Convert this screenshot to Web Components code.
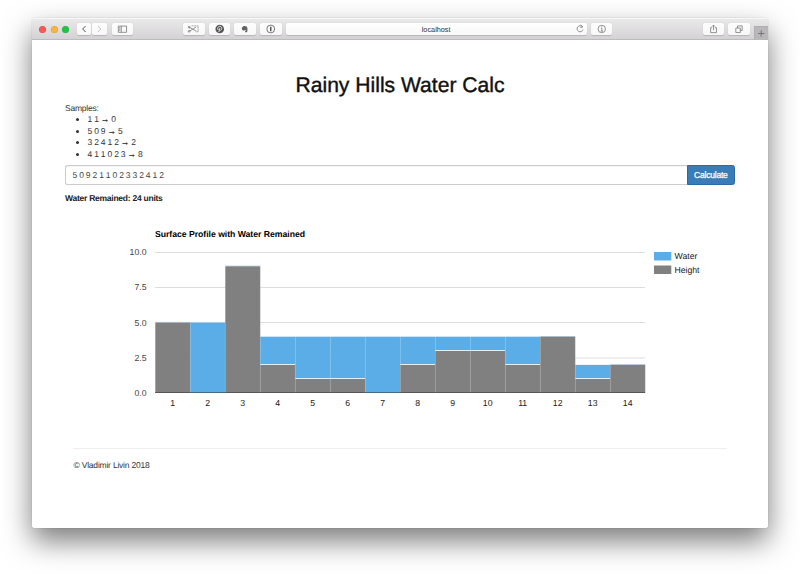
<!DOCTYPE html>
<html lang="en">
<head>
<meta charset="utf-8">
<title>Rainy Hills Water Calc</title>
<style>
html,body{margin:0;height:574px;overflow:hidden;background:#fff}
body{font-family:"Liberation Sans",Arial,sans-serif;font-size:8.5px;letter-spacing:-.21px;line-height:11.5px;color:#333;text-rendering:geometricPrecision}
</style>
</head>
<body>
<browser-window>
  <browser-toolbar slot="bar"></browser-toolbar>
  <water-page></water-page>
</browser-window>
<script>
const define = (name, html, setup) => customElements.define(name, class extends HTMLElement {
  connectedCallback() {
    if (this.shadowRoot) return;
    const root = this.attachShadow({mode: 'open'});
    root.innerHTML = html;
    if (setup) setup(root, this);
  }
});

define('browser-window', `
<style>
:host{display:block;padding:18px 32px 46px}
.frame{height:510px;border-radius:3px;display:flex;flex-direction:column;background:#fff;overflow:hidden}
.shadow{border-radius:3px;box-shadow:0 0 1px rgba(0,0,0,.35),0 13px 29px rgba(0,0,0,.52)}
</style>
<div class="shadow"><div class="frame"><slot name="bar"></slot><slot></slot></div></div>`);

define('tool-button', `
<style>
:host{display:block;width:21.5px;height:12px;border-radius:2px;background:linear-gradient(#fdfdfd,#f7f7f7);box-shadow:0 .5px 1px rgba(0,0,0,.16);flex:none}
::slotted(svg){display:block;width:100%;height:100%;fill:none;stroke:#777;stroke-width:.8}
</style><slot></slot>`);

define('browser-toolbar', `
<style>
:host{display:flex;height:22px;box-sizing:border-box;align-items:center;background:linear-gradient(#eae9ea,#d4d2d4);border-top:1px solid #f7f7f7;border-bottom:1px solid #bdbbbd;flex:none;position:relative}
.lights{display:flex;gap:4.5px;padding-left:7.3px;width:38px;box-sizing:border-box}
.lights i{width:7px;height:7px;border-radius:50%;flex:none;box-shadow:inset 0 0 0 .5px rgba(0,0,0,.12)}
.nav{display:flex;gap:1px;margin-left:7px;margin-right:5px}
.nav tool-button{width:14.3px}
.ext{display:flex;gap:4.2px;margin-left:50px}
.url{width:301px;height:12px;border-radius:2px;background:linear-gradient(#fff,#f8f8f8);box-shadow:0 .5px 1px rgba(0,0,0,.16);margin:0 4px;display:grid;grid-template-columns:1fr auto 1fr;align-items:center;font-size:7.3px;letter-spacing:0;line-height:12px;color:#333;flex:none}
.url svg{justify-self:end;width:12px;height:12px;margin-right:1px;fill:none;stroke:#777;stroke-width:.8}
.url span{position:relative;top:.5px}
.right{display:flex;gap:4px;margin-left:90.5px}
.plus{position:absolute;right:0;top:7px;width:14px;height:14px;background:#b9b7b9;box-shadow:inset .5px .5px #a9a8a9}
.plus svg{display:block;stroke:#666;stroke-width:.8}
</style>
<div class="lights"><i style="background:#fc5753"></i><i style="background:#fdb43c"></i><i style="background:#1fc544"></i></div>
<div class="nav">
<tool-button><svg viewBox="0 0 14 12"><path d="M8.4 3 5.5 6l2.9 3" stroke="#555" stroke-width="1"/></svg></tool-button>
<tool-button><svg viewBox="0 0 14 12"><path d="M5.8 3l2.9 3-2.9 3" style="stroke:#b5b5b5"/></svg></tool-button>
</div>
<tool-button><svg viewBox="0 0 22 12"><path d="M6.5 3h8.4v6.4H6.5zM9.5 3v6.4M7.3 4.6h1.3M7.3 6h1.3M7.3 7.4h1.3"/></svg></tool-button>
<div class="ext">
<tool-button><svg viewBox="0 0 22 12"><path d="M8.8 2.8h6.7v6H13" stroke-dasharray="1.2 .7"/><path d="M6 3.8l7.4 4.4M6.6 8.2l6.8-4.1"/><circle cx="6.3" cy="8.4" r=".9"/><circle cx="6.3" cy="4.2" r=".9"/></svg></tool-button>
<tool-button><svg viewBox="0 0 22 12"><circle cx="11" cy="6" r="4.4" style="fill:#555;stroke:none"/><path d="M9.4 7C7.8 4.4 10 3.1 11.6 3.3c2.4.4 1.7 4.2-.1 4-.8-.1-.9-.5-.9-.5M11.2 4.8 10 9.2" style="stroke:#fff"/></svg></tool-button>
<tool-button><svg viewBox="0 0 22 12"><path d="M8 4.6 9.8 3h1.4l2.1.6c.7 1.8.7 4.2 0 5.7h-1.9l-.1-1.2h.8V7.4l-1.1-.3-.5.6-1.6-.4C8.2 6.7 8 5.7 8 4.6z" style="fill:#646464;stroke:none"/></svg></tool-button>
<tool-button><svg viewBox="0 0 22 12"><circle cx="11" cy="6" r="4" style="stroke:#555"/><path d="M11 3.7v4.6" style="stroke:#555;stroke-width:1.5"/></svg></tool-button>
</div>
<div class="url"><span></span><span>localhost</span><svg viewBox="0 0 12 12"><path d="M8.6 4.1A3 3 0 1 0 9 6.6M6.5 1.7l2.2 2.2-2.3.8"/></svg></div>
<tool-button><svg viewBox="0 0 22 12"><circle cx="11" cy="6" r="3.8"/><path d="M10.1 5.2h1.1v2.9M9.9 8.2h2.4M10.6 3.7h1"/></svg></tool-button>
<div class="right">
<tool-button><svg viewBox="0 0 22 12"><path d="M9.4 4.7H7.8v5h6v-5h-1.6M10.8 7.3V2M9.2 3.6l1.6-1.6 1.6 1.6"/></svg></tool-button>
<tool-button><svg viewBox="0 0 22 12"><path d="M8 5h4.6v4.6H8zM9.8 5V2.8h4.7v4.7h-1.9"/></svg></tool-button>
</div>
<div class="plus"><svg viewBox="0 0 14 14"><path d="M4 7.5h6.4M7.2 4.3v6.4"/></svg></div>`);

define('sample-list', `
<style>
:host{display:block}
ul{margin:0;padding-left:22.5px}
li::marker{font-size:9.5px}
b{font-weight:400;-webkit-text-stroke:.3px #333}
</style>
Samples:<ul><li>1 1 <b>→</b> 0</li><li>5 0 9 <b>→</b> 5</li><li>3 2 4 1 2 <b>→</b> 2</li><li>4 1 1 0 2 3 <b>→</b> 8</li></ul>`);

define('calc-form', `
<style>
:host{display:flex;height:20px;margin-top:5px}
.field{flex:1;border:1px solid #ccc;border-right:0;border-radius:2.5px 0 0 2.5px;box-shadow:inset 0 .5px .5px rgba(0,0,0,.075);padding-left:6.5px;line-height:18px;color:#444}
button{width:48.4px;padding:0;border:1px solid #2a6ba4;background:#3a7cb8;border-radius:0 2.5px 2.5px 0;color:#fff;font:inherit;letter-spacing:inherit;line-height:18px;-webkit-text-stroke:.25px #fff}
</style>
<div class="field">5 0 9 2 1 1 0 2 3 3 2 4 1 2</div><button>Calculate</button>`);

define('profile-chart', `
<style>
:host{display:block;height:200px}
svg{display:block}
text{font-family:"Liberation Sans",Arial,sans-serif;font-size:8.7px;letter-spacing:0;fill:#222}
.axis{fill:#444}
</style>
<svg width="670" height="200" viewBox="65 220 670 200"></svg>`, root => {
  const heights = [5,0,9,2,1,1,0,2,3,3,2,4,1,2];
  const water = [0,5,0,2,3,3,4,2,1,1,2,0,1,0];
  const y = v => 393 - v * 14.08;
  const rect = (x, top, w, h, fill) => `<rect x="${x}" y="${top}" width="${w}" height="${h}" fill="${fill}"/>`;
  let s = '<text x="155" y="237" font-weight="bold" textLength="150" style="fill:#000">Surface Profile with Water Remained</text>';
  for (const [v, top] of [[10,252],[7.5,287],[5,322],[2.5,357.5]]) s += rect(155, top, 490, 1, '#ddd');
  for (const v of [10,7.5,5,2.5,0]) s += `<text class="axis" x="146.5" y="${y(v) + 3}" text-anchor="end">${v.toFixed(1)}</text>`;
  heights.forEach((h, i) => {
    const x = 155.3 + i * 35, total = h + water[i];
    if (water[i]) s += rect(x, y(total), 35, water[i] * 14.08, '#5aade7');
    else s += rect(x, y(total) - .7, 35, .8, '#b4d4ee');
    if (h) {
      s += rect(x, y(h), 35, h * 14.08, '#808080');
      if (water[i]) s += rect(x, Math.round(y(h)) - 1, 35, 1, '#e4eef5');
    }
    s += rect(x + 34.6, y(total), .8, total * 14.08, 'rgba(255,255,255,.18)');
    s += `<text x="${x + 17.4}" y="405.6" text-anchor="middle">${i + 1}</text>`;
  });
  s += rect(155, 392, 490, 1, '#333" fill-opacity=".55');
  for (const [x, top, fill, label, w] of [[654,252,'#5aade7','Water',23],[654,265.5,'#808080','Height',25]])
    s += rect(x, top, 17.3, 8.5, fill) + `<text x="674.5" y="${top + 7.3}" textLength="${w}">${label}</text>`;
  root.querySelector('svg').innerHTML = s;
});

define('page-footer', `
<style>
:host{display:block;margin:28px 8px 0;border-top:1px solid #eee;padding:11px 0 0 .5px}
</style><slot></slot>`);

define('water-page', `
<style>
:host{display:block;padding:0 33px}
h1{margin:34px 0 4.6px;font-size:21.1px;line-height:24px;font-weight:400;letter-spacing:0;text-align:center;color:#111;-webkit-text-stroke:.4px #111}
.result{font-weight:700;letter-spacing:-.25px;margin:8px 0 15.4px;color:#222}
</style>
<h1>Rainy Hills Water Calc</h1>
<sample-list></sample-list>
<calc-form></calc-form>
<div class="result">Water Remained: 24 units</div>
<profile-chart></profile-chart>
<page-footer>© Vladimir Livin 2018</page-footer>`);
</script>
</body>
</html>
